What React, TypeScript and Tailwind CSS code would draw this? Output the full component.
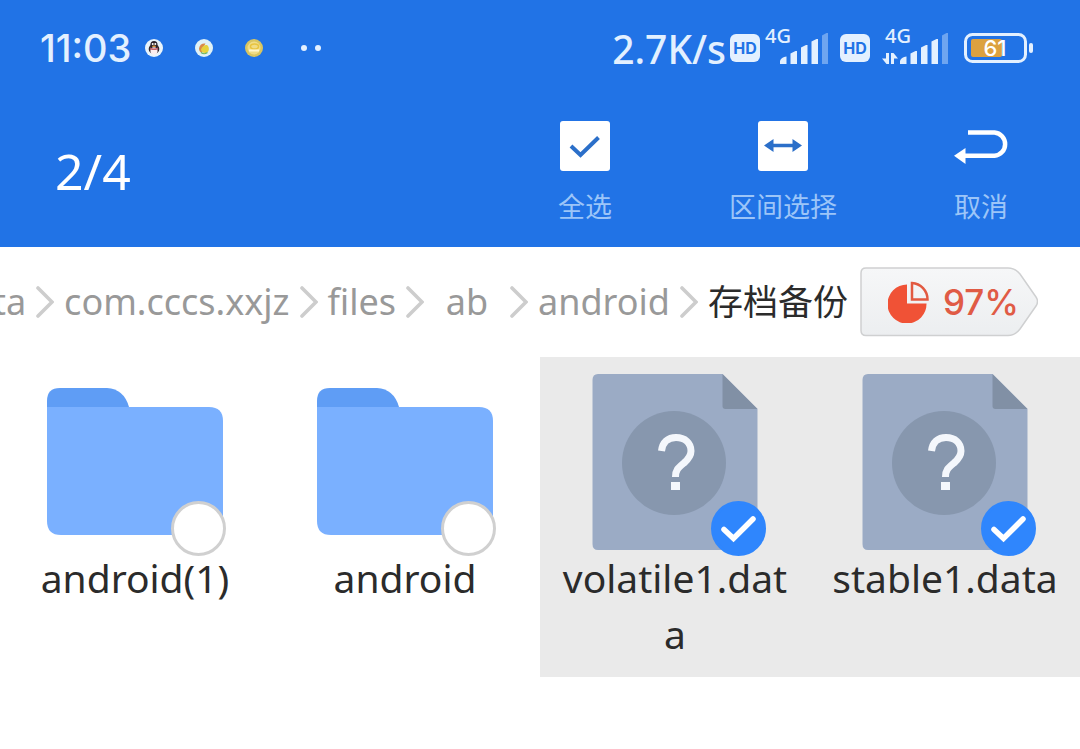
import { useState } from 'react';

const actions = [
  { name: '全选', icon: SelectAllIcon },
  { name: '区间选择', icon: RangeIcon },
  { name: '取消', icon: CancelIcon },
];

const crumbs = ['data', 'com.cccs.xxjz', 'files', 'ab', 'android'];

const files = [
  { name: 'android(1)', folder: true, selected: false },
  { name: 'android', folder: true, selected: false },
  { name: 'volatile1.data', folder: false, selected: true },
  { name: 'stable1.data', folder: false, selected: true },
];

function SelectAllIcon() {
  return (
    <svg width="50" height="50" viewBox="0 0 50 50" aria-hidden="true">
      <rect width="50" height="50" rx="3" fill="#fff" />
      <path d="M11 25L20.5 34L38.5 16.5" fill="none" stroke="#2b6fc9" strokeWidth="4" />
    </svg>
  );
}

function RangeIcon() {
  return (
    <svg width="50" height="50" viewBox="0 0 50 50" aria-hidden="true">
      <rect width="50" height="50" rx="3" fill="#fff" />
      <path d="M6 24.5L15.5 18V22.7H34.5V18L44 24.5L34.5 31V26.3H15.5V31Z" fill="#2b6fc9" />
    </svg>
  );
}

function CancelIcon() {
  return (
    <svg width="54" height="50" viewBox="0 0 54 50" aria-hidden="true">
      <path d="M14 11.5H40.5A11.7 11.7 0 0 1 40.5 34.8H10" fill="none" stroke="#fff" strokeWidth="4.5" />
      <path d="M0 34.8L11.5 27V43Z" fill="#fff" />
    </svg>
  );
}

function NotificationIcons() {
  return (
    <div className="flex items-center gap-8">
      <svg width="18" height="18" viewBox="0 0 18 18" aria-hidden="true">
        <circle cx="9" cy="9" r="9" fill="#e9f4fb" />
        <ellipse cx="9" cy="10" rx="5.3" ry="5" fill="#33262c" />
        <ellipse cx="9" cy="6" rx="3.6" ry="4" fill="#2a2229" />
        <ellipse cx="9" cy="12" rx="3.6" ry="3.7" fill="#fbeef0" />
        <path d="M5 8.6Q9 10.6 13 8.6L12.6 10.4Q9 11.8 5.4 10.4Z" fill="#c9606a" />
        <circle cx="7.7" cy="5" r="1" fill="#fff" />
        <circle cx="10.3" cy="5" r="1" fill="#fff" />
        <ellipse cx="9" cy="7.2" rx="2" ry=".8" fill="#e9a23c" />
      </svg>
      <svg width="18" height="18" viewBox="0 0 18 18" aria-hidden="true">
        <circle cx="9" cy="9" r="9" fill="#dff1f6" />
        <path d="M4 9.5C4.5 6 7 4 10.5 4.5L8 9L7 14C5 13.5 4 11.5 4 9.5Z" fill="#d98a4a" />
        <path d="M6 10.5C7 7 10 5.5 12 6C14.5 8 14.5 12 12 13.5C9 15 6.5 13.5 6 10.5Z" fill="#e6d23c" />
        <path d="M6 13.5Q9 16 12.5 13.5" fill="none" stroke="#6cb56a" strokeWidth="1.2" />
      </svg>
      <svg width="18" height="18" viewBox="0 0 18 18" aria-hidden="true">
        <circle cx="9" cy="9" r="9" fill="#d9c560" />
        <circle cx="9" cy="9" r="6.5" fill="#f0dc86" />
        <ellipse cx="9.5" cy="7.5" rx="4" ry="2.5" fill="none" stroke="#e8c440" strokeWidth="1.5" />
        <path d="M4 11.5H14" stroke="#fff6cf" strokeWidth="2" />
      </svg>
    </div>
  );
}

function HdBadge() {
  return (
    <span className="flex h-7 w-[30px] items-center justify-center rounded-md bg-[#e3f0ff] font-['Inter'] text-base font-bold leading-none text-[#2173e6]">
      HD
    </span>
  );
}

function Signal({ arrows = false }: { arrows?: boolean }) {
  return (
    <svg width={arrows ? 66 : 64} height="44" viewBox={arrows ? '-4 -6 66 44' : '-2 -6 64 44'} aria-label="4G">
      <text x="-1" y="17" fontSize="20" fontWeight="500" fill="#e3f0ff">
        4G
      </text>
      {arrows && (
        <path d="M3 27V38H0.5L-4 32.5H0V27ZM5 38V27H7.5L12 32.5H8V38Z" fill="#e3f0ff" />
      )}
      <g fill="#e3f0ff">
        <path d="M14 38V35Q15 31 20.5 30.5V38Z" />
        <path d="M24.5 38V27.5L29.5 25H31V38Z" />
        <path d="M35 38V21.5L40 19H41.5V38Z" />
        <path d="M45.5 38V15.5L50.5 13H52V38Z" />
        <path d="M56 38V9.5L60.5 7H62V38Z" opacity=".4" />
      </g>
    </svg>
  );
}

function Battery() {
  return (
    <svg width="69" height="30" viewBox="0 0 69 30" aria-label="Battery 61%">
      <rect x="1.5" y="1.5" width="60" height="27" rx="7" fill="none" stroke="#e3f0ff" strokeWidth="3" />
      <rect x="7" y="6" width="31" height="18" rx="2" fill="#dca13f" />
      <rect x="65" y="10" width="4" height="10" rx="2" fill="#e3f0ff" />
      <text x="31" y="23" textAnchor="middle" fontSize="22" fontWeight="500" fill="#fff" className="font-['Inter']">
        61
      </text>
    </svg>
  );
}

function StatusBar() {
  return (
    <div className="flex h-24 items-center justify-between pl-10 pr-[47px] text-[#e3f0ff]">
      <div className="flex items-center">
        <span className="w-[105px] font-['Inter'] text-[38px] font-medium leading-none">11:03</span>
        <NotificationIcons />
        <div className="ml-[38px] flex gap-2">
          <i className="size-[6px] rounded-full bg-[#e3f0ff]" />
          <i className="size-[6px] rounded-full bg-[#e3f0ff]" />
        </div>
      </div>
      <div className="flex items-center">
        <span className="mr-1 text-[39px] font-medium leading-none">2.7K/s</span>
        <HdBadge />
        <div className="ml-1 mr-3 pb-3">
          <Signal />
        </div>
        <HdBadge />
        <div className="ml-3 mr-4 pb-3">
          <Signal arrows />
        </div>
        <Battery />
      </div>
    </div>
  );
}

function Chevron() {
  return (
    <svg width="18" height="32" viewBox="0 0 18 32" className="shrink-0" aria-hidden="true">
      <path d="M2 2L16 16L2 30" fill="none" stroke="#cdcdcd" strokeWidth="3.6" strokeLinecap="round" />
    </svg>
  );
}

function StorageTag() {
  return (
    <button type="button" className="relative ml-3 flex h-[70px] w-[178px] shrink-0 items-center gap-[14px] pl-7">
      <svg className="absolute inset-0 size-full" viewBox="0 0 178 70" aria-hidden="true">
        <defs>
          <linearGradient id="tag" x1="0" y1="0" x2="0" y2="1">
            <stop offset="0" stopColor="#f6f7f8" />
            <stop offset="1" stopColor="#eceef0" />
          </linearGradient>
        </defs>
        <path
          d="M6 1H148Q155 1 160 7L176 30Q179 34.5 176 39L160 62Q155 68.5 148 68.5H6Q1 68.5 1 63.5V6Q1 1 6 1Z"
          fill="url(#tag)"
          stroke="#cfd0d1"
          strokeWidth="1.5"
        />
      </svg>
      <svg width="41" height="42" viewBox="0 0 41 42" className="relative" aria-hidden="true">
        <path d="M19 3.5V22.5H38.5A19.5 19.5 0 1 1 19 3.5Z" fill="#f05236" />
        <path d="M24 2V18.5H39.5A16.5 16.5 0 0 0 24 2Z" fill="none" stroke="#e25a41" strokeWidth="2.5" />
      </svg>
      <span className="relative font-['Inter'] text-[35px] font-medium leading-none text-[#e05b45]">97%</span>
    </button>
  );
}

function Breadcrumb() {
  return (
    <nav aria-label="Path" className="flex items-center justify-end overflow-hidden py-5 pr-[42px] text-[36px] leading-[56px]">
      <ol className="flex items-center justify-end gap-[10px]">
        {crumbs.map((crumb) => (
          <li key={crumb} className="flex items-center gap-[10px] text-[#999]">
            <a href="#" className="min-w-[66px] text-center">
              {crumb}
            </a>
            <Chevron />
          </li>
        ))}
        <li className="whitespace-nowrap text-[35px] text-[#2b2b2b]" aria-current="page">
          存档备份
        </li>
      </ol>
      <StorageTag />
    </nav>
  );
}

function FolderIcon() {
  return (
    <svg width="176" height="176" viewBox="0 0 176 176" aria-hidden="true">
      <path d="M0 40V27Q0 14 13 14H60Q77 15 82 33V40Z" fill="#5f9df5" />
      <path d="M0 33H162Q176 33 176 47V147Q176 161 162 161H14Q0 161 0 147Z" fill="#7ab0ff" />
    </svg>
  );
}

function UnknownFileIcon() {
  return (
    <svg width="176" height="176" viewBox="0 0 176 176" aria-hidden="true">
      <path d="M11 0H135.5L170.5 35V170Q170.5 176 164.5 176H11Q5.5 176 5.5 170V6Q5.5 0 11 0Z" fill="#9babc5" />
      <path d="M135.5 0L170.5 35H138.5Q135.5 35 135.5 32Z" fill="#8190a5" />
      <circle cx="87" cy="89" r="52" fill="#8797ae" />
      <path
        d="M74.5 77C75.5 68 81 63.5 89 63.5C98 63.5 104 69 104 77C104 82 101 85.5 97 89C91 94 88.5 96 88.5 103"
        fill="none"
        stroke="#f4f7fc"
        strokeWidth="7"
      />
      <rect x="84" y="108" width="9" height="8" fill="#f4f7fc" />
    </svg>
  );
}

function FileCell({ file }: { file: (typeof files)[number] }) {
  const [checked, setChecked] = useState(file.selected);

  return (
    <li>
      <label className={`flex h-full flex-col items-center px-4 pb-[15px] pt-[17px] ${checked ? 'bg-[#eaeaea]' : ''}`}>
        <span className="relative">
          {file.folder ? <FolderIcon /> : <UnknownFileIcon />}
          <input
            type="checkbox"
            checked={checked}
            onChange={() => setChecked(!checked)}
            className="peer absolute -bottom-[6px] -right-[3px] size-[55px] appearance-none rounded-full border-[3px] border-[#d0d0d0] bg-white checked:border-[#2f86fd] checked:bg-[#2f86fd]"
          />
          <svg
            viewBox="0 0 55 55"
            className="pointer-events-none absolute -bottom-[6px] -right-[3px] hidden size-[55px] peer-checked:block"
            aria-hidden="true"
          >
            <path
              d="M13 28.5L22.5 37.5L42 18"
              fill="none"
              stroke="#fff"
              strokeWidth="5.5"
              strokeLinecap="round"
            />
          </svg>
        </span>
        <span className="w-full break-all text-center text-[39px] leading-[56px] text-[#2b2b2b]">{file.name}</span>
      </label>
    </li>
  );
}

export default function App() {
  return (
    <div className="min-h-screen bg-white font-['Noto_Sans','Noto_Sans_CJK_SC',sans-serif]">
      <header className="bg-[#2173e6]">
        <StatusBar />
        <div className="flex h-[151px] items-center justify-between pb-[2px] pl-[55px]">
          <h1 className="text-[50px] leading-none text-white">2/4</h1>
          <div className="flex">
            {actions.map((action) => (
              <button
                key={action.name}
                type="button"
                className="flex w-[198px] flex-col items-center gap-[22px] text-[27px] leading-7 text-[#9cc5f8]"
              >
                <action.icon />
                {action.name}
              </button>
            ))}
          </div>
        </div>
      </header>
      <Breadcrumb />
      <ul className="grid grid-cols-4">
        {files.map((file) => (
          <FileCell key={file.name} file={file} />
        ))}
      </ul>
    </div>
  );
}
